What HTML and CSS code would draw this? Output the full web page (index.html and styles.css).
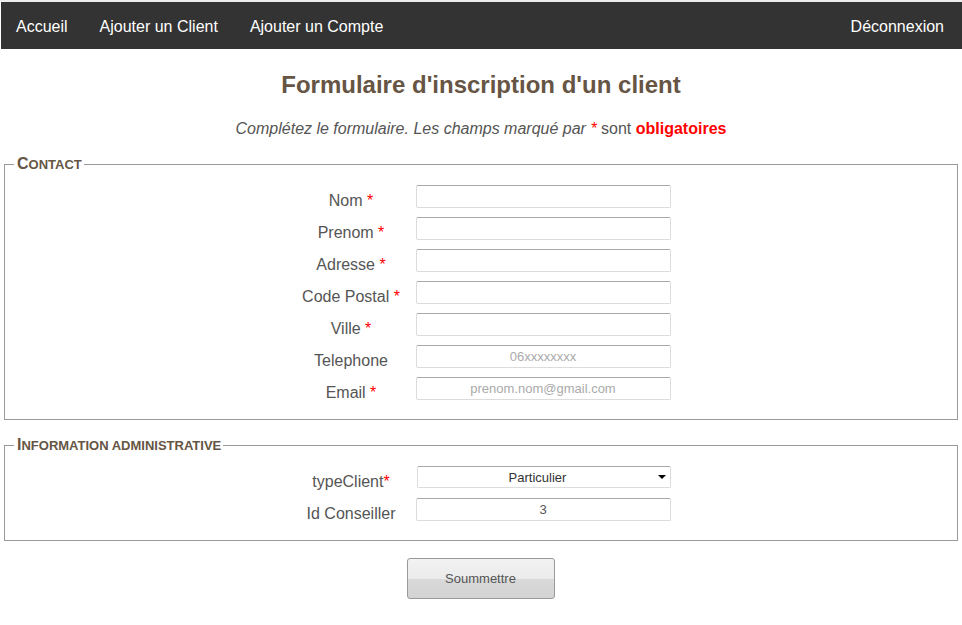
FILE: index.html
```
<!DOCTYPE html>
<html lang="fr">
<head>
<meta charset="utf-8">
<title>Formulaire d'inscription d'un client</title>
<link rel="stylesheet" href="styles.css">
</head>
<body>
<nav class="topnav">
  <div class="nav-left">
    <a class="nav-link" href="#">Accueil</a>
    <a class="nav-link" href="#">Ajouter un Client</a>
    <a class="nav-link" href="#">Ajouter un Compte</a>
  </div>
  <a class="nav-link nav-right" href="#">Déconnexion</a>
</nav>

<h1 class="title">Formulaire d'inscription d'un client</h1>
<p class="intro"><em>Complétez le formulaire. Les champs marqué par <span class="req">*</span></em> sont <strong class="req">obligatoires</strong></p>

<form class="form">
  <fieldset class="group">
    <legend class="legend"><span class="legend-cap">C</span>ontact</legend>
    <div class="rows">
      <label class="lbl">Nom <span class="req">*</span></label><input class="field" type="text">
      <label class="lbl">Prenom <span class="req">*</span></label><input class="field" type="text">
      <label class="lbl">Adresse <span class="req">*</span></label><input class="field" type="text">
      <label class="lbl">Code Postal <span class="req">*</span></label><input class="field" type="text">
      <label class="lbl">Ville <span class="req">*</span></label><input class="field" type="text">
      <label class="lbl">Telephone</label><input class="field" type="text" placeholder="06xxxxxxxx">
      <label class="lbl">Email <span class="req">*</span></label><input class="field" type="text" placeholder="prenom.nom@gmail.com">
    </div>
  </fieldset>

  <fieldset class="group group-admin">
    <legend class="legend"><span class="legend-cap">I</span>nformation administrative</legend>
    <div class="rows">
      <label class="lbl">typeClient<span class="req">*</span></label>
      <span class="select-wrap"><select class="field select"><option>Particulier</option><option>Professionnel</option></select></span>
      <label class="lbl">Id Conseiller</label><input class="field" type="text" value="3">
    </div>
  </fieldset>

  <div class="actions">
    <button class="submit" type="button">Soummettre</button>
  </div>
</form>
</body>
</html>
```

FILE: styles.css
```
* { box-sizing: border-box; }

html, body {
  margin: 0;
  padding: 0;
  background: #fff;
}

body {
  font-family: "Liberation Sans", Arial, sans-serif;
  color: #555;
  border-top: 2px solid #ececec;
}

.topnav {
  display: flex;
  justify-content: space-between;
  align-items: center;
  height: 47px;
  margin-left: 1px;
  background: #333;
}

.nav-left {
  display: flex;
  margin-left: -1px;
}

.nav-link {
  color: #fff;
  text-decoration: none;
  font-size: 16px;
  padding: 2px 16px 0;
  line-height: 45px;
}

.nav-right { margin-right: 2px; }

.title {
  margin: 22px 0 0;
  text-align: center;
  font-size: 24px;
  line-height: 28px;
  font-weight: bold;
  color: #665544;
}

.intro {
  margin: 20px 0 0;
  text-align: center;
  font-size: 16px;
  line-height: 20px;
  color: #555;
}

.intro em { font-style: italic; }

.req { color: #f00; }
strong.req { font-weight: bold; }

.form { margin: 0; }

.group {
  margin: 17px 4px 0 4px;
  padding: 12px 0 19px;
  border: 1px solid #9a9a9a;
  min-width: 0;
}

.group-admin {
  margin-top: 17px;
  padding-top: 12px;
  padding-bottom: 19px;
}

.legend {
  margin-left: 9px;
  padding: 0 2px 0 3px;
  font-size: 13px;
  font-weight: bold;
  text-transform: uppercase;
  color: #665544;
  line-height: 16px;
}

.legend-cap { font-size: 16px; }

.rows {
  display: grid;
  grid-template-columns: 121px 255px;
  column-gap: 5px;
  row-gap: 9px;
  justify-content: center;
  align-items: start;
  margin-left: -2px;
}

.lbl {
  height: 23px;
  text-align: center;
  font-size: 16px;
  line-height: 20px;
  padding-top: 6px;
  padding-left: 2px;
  color: #555;
  white-space: nowrap;
}

.field {
  display: block;
  width: 255px;
  height: 23px;
  margin: 0;
  padding: 0 4px;
  border: 1px solid #dcdcdc;
  border-top-color: #a9a9a9;
  border-radius: 2px;
  background: #fff;
  font-family: "Liberation Sans", Arial, sans-serif;
  font-size: 13px;
  color: #555;
  text-align: center;
  outline: none;
}

.field::placeholder { color: #aaa; }

.select-wrap {
  position: relative;
  display: block;
  width: 254px;
  margin-left: 1px;
}

.select {
  width: 254px;
  height: 22px;
  appearance: none;
  -webkit-appearance: none;
  text-align-last: center;
  padding: 0 16px 0 4px;
  color: #333;
}

.select-wrap::after {
  content: "";
  position: absolute;
  right: 5px;
  top: 9px;
  border-left: 4px solid transparent;
  border-right: 4px solid transparent;
  border-top: 4px solid #000;
  pointer-events: none;
}

.actions {
  display: flex;
  justify-content: center;
  margin-top: 17px;
}

.submit {
  width: 148px;
  height: 41px;
  margin-left: -1px;
  border: 1px solid #999;
  border-radius: 3px;
  background: linear-gradient(#f2f2f2 0%, #ebebeb 50%, #d9d9d9 51%, #d3d3d3 100%);
  font-family: "Liberation Sans", Arial, sans-serif;
  font-size: 13px;
  color: #555;
}
```
